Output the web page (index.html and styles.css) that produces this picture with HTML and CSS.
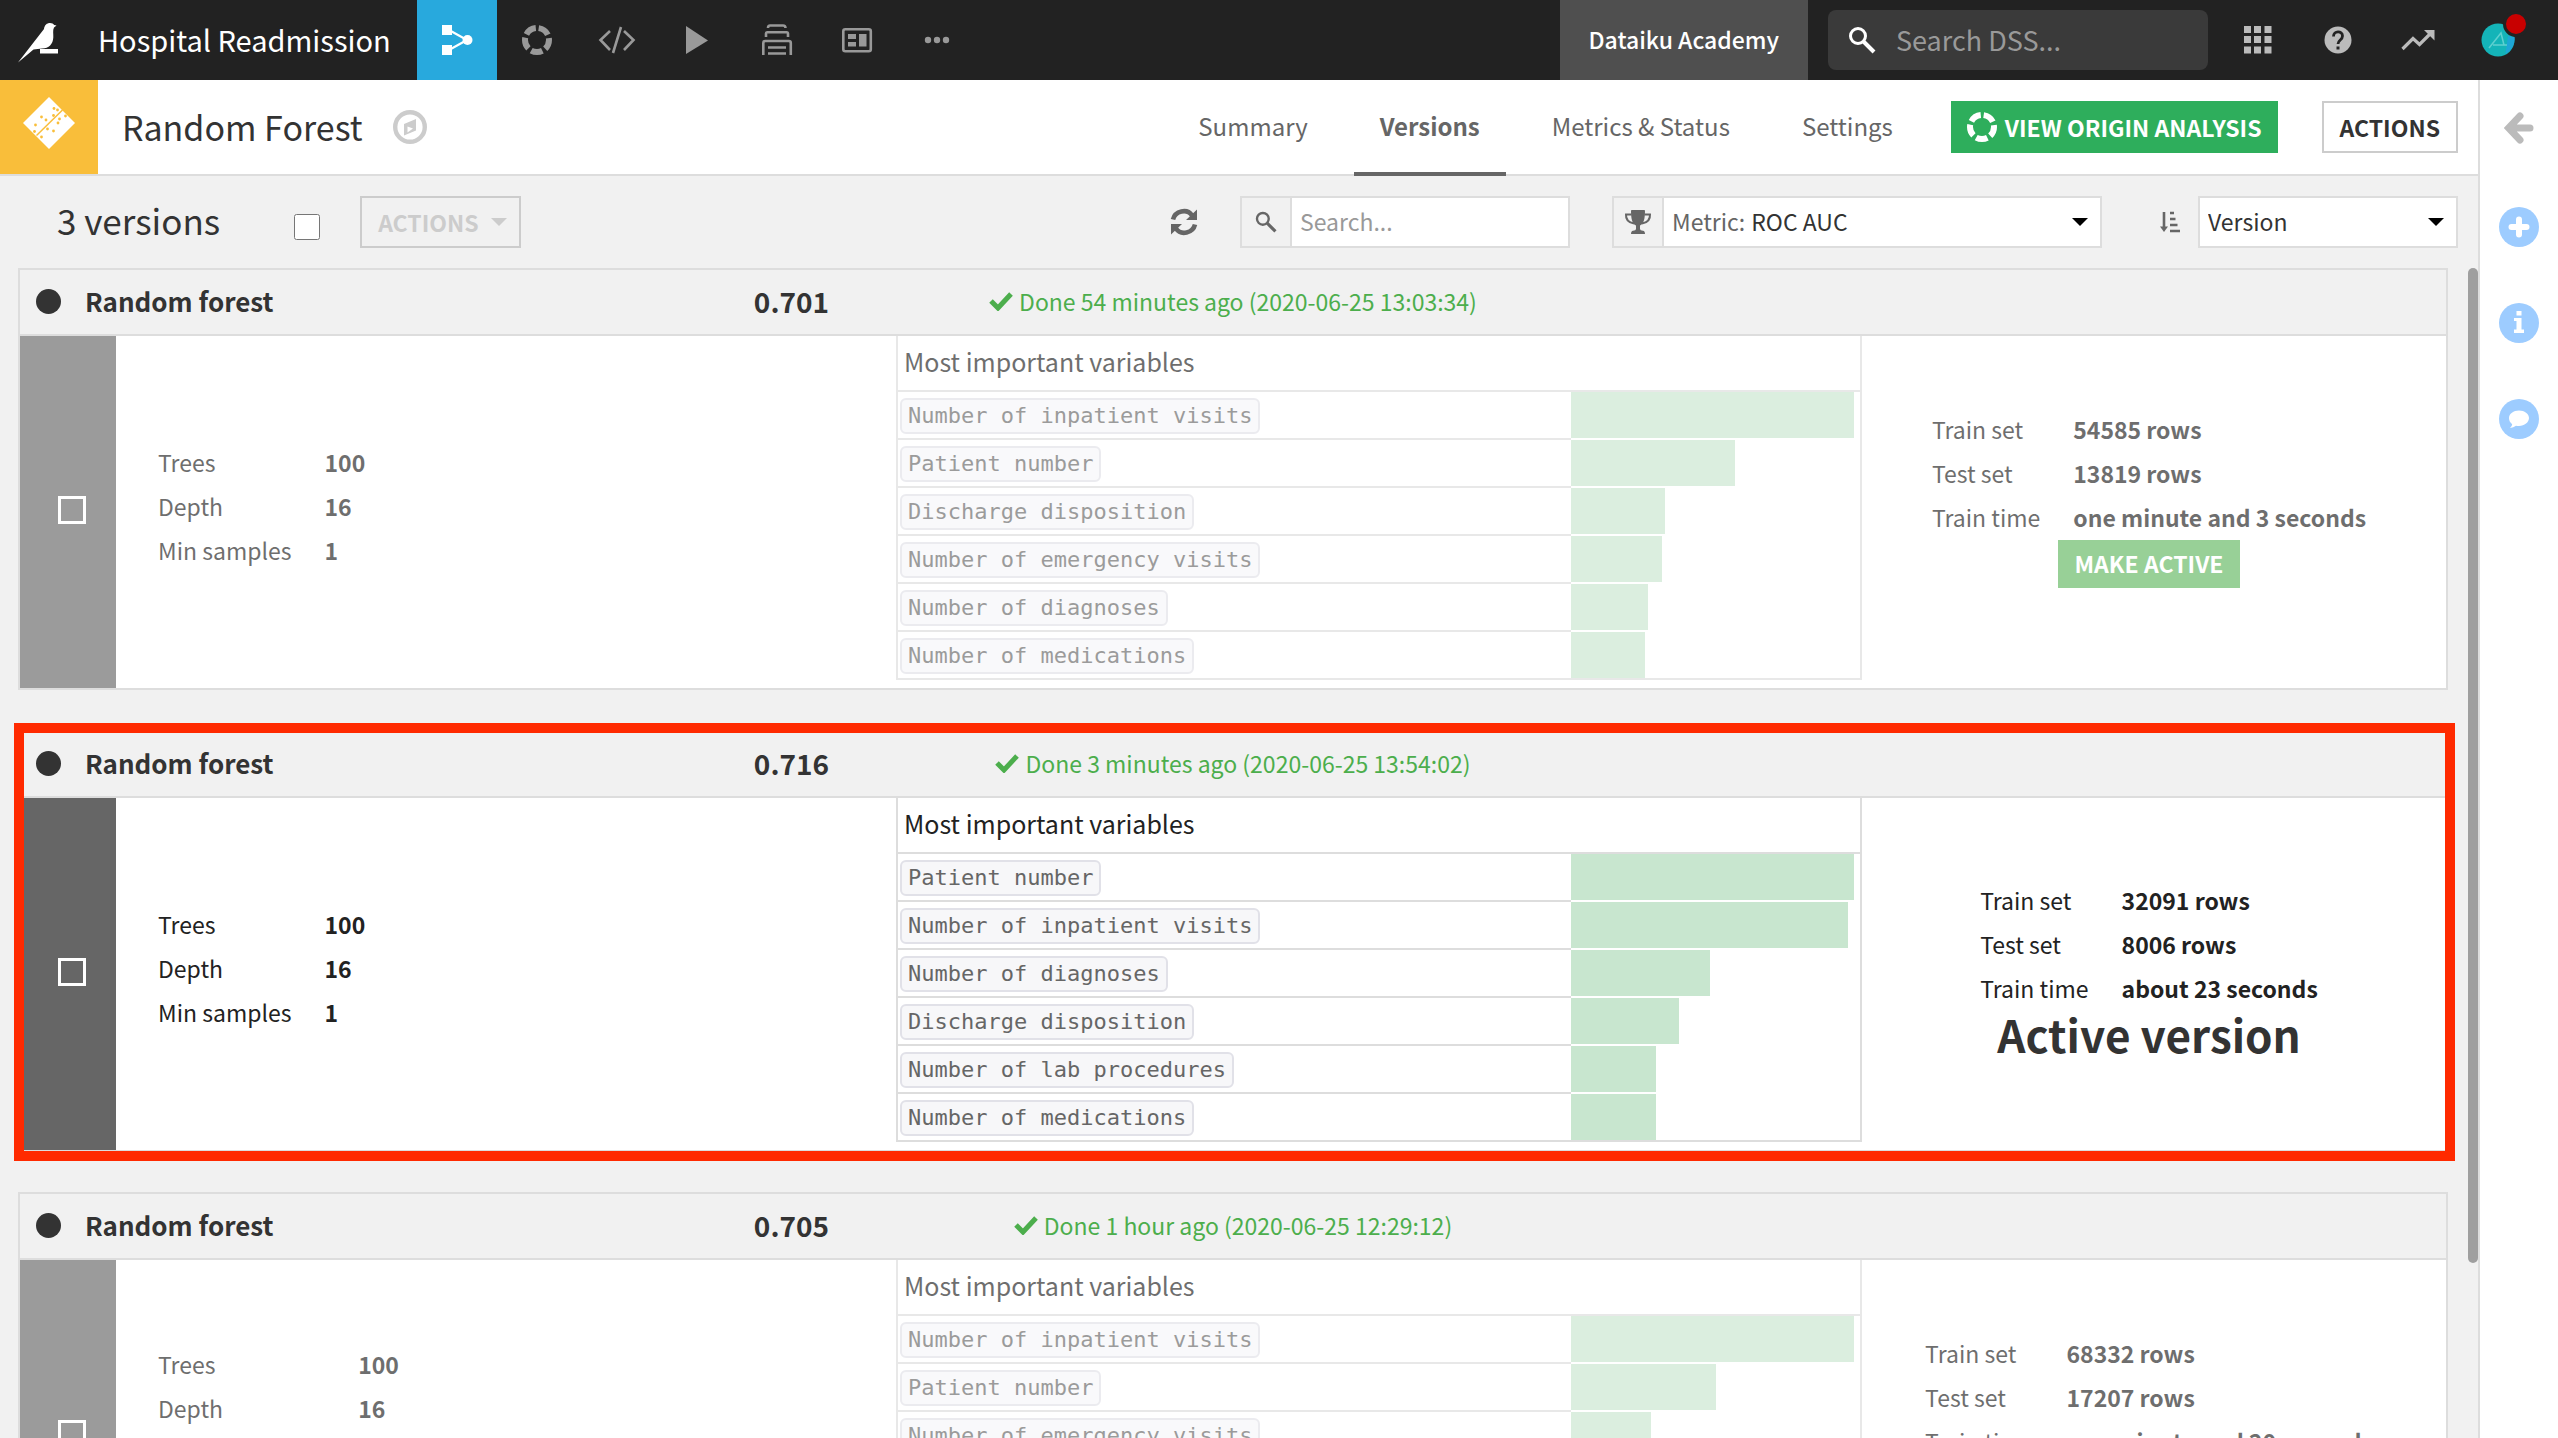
FILE: index.html
```html
<!DOCTYPE html>
<html lang="en">
<head>
    <meta charset="UTF-8">
    <meta name="viewport" content="width=device-width, initial-scale=1.0">
    <title>Random Forest - Versions</title>
    <link rel="stylesheet" href="styles.css">
</head>
<body>

    <svg class="sprite" aria-hidden="true">
        <symbol id="ring" viewBox="0 0 30 30">
            <circle cx="15" cy="15" r="12" fill="none" stroke="currentColor" stroke-width="6" stroke-dasharray="11.6 3.48" stroke-dashoffset="-1.74" transform="rotate(-90 15 15)"/>
        </symbol>
        <symbol id="search" viewBox="0 0 28 28">
            <circle cx="10" cy="10" r="7.5" fill="none" stroke="currentColor" stroke-width="3"/>
            <path d="M15.5 15.5L26 26" stroke="currentColor" stroke-width="4"/>
        </symbol>
        <symbol id="check" viewBox="0 0 24 20">
            <path d="M2 10l7 7L22 3" fill="none" stroke="currentColor" stroke-width="5"/>
        </symbol>
    </svg>

    <header class="topbar">
        <a class="logo" href="#" aria-label="Home">
            <svg width="40" height="40" viewBox="0 0 40 40" fill="#fff"><path d="M0 39.500L26 6C26.500 2 29 0 32 0c2 0 3.500.8 4.200 2L38.500 2.500 36 4.500c-1.500 3-.5 6-.7 10C35 21 31 25.500 24 25.500L15.500 26.500Z"/><path d="M22 26h18v4.500H22z"/></svg>
        </a>
        <a class="project" href="#">Hospital Readmission</a>
        <nav class="topnav">
            <a class="active" href="#" aria-label="Flow"><svg width="32" height="32" viewBox="0 0 32 32" fill="#fff"><path d="M1 1h10v10H1zM1 21h10v10H1z"/><circle cx="26.500" cy="16" r="5"/><path d="M8 6l18 10L8 26" fill="none" stroke="#fff" stroke-width="2.200"/></svg></a>
            <a href="#" aria-label="Lab"><svg width="30" height="30"><use href="#ring"/></svg></a>
            <a href="#" aria-label="Code"><svg width="38" height="30" viewBox="0 0 38 30" fill="none" stroke="currentColor" stroke-width="2.600"><path d="M12 6L2.500 15 12 25M26 6l9.500 9L26 25M23 2l-8 26"/></svg></a>
            <a href="#" aria-label="Jobs"><svg width="22" height="30" viewBox="0 0 22 30" fill="currentColor"><path d="M0 1l22 14.500L0 29z"/></svg></a>
            <a href="#" aria-label="Automation"><svg width="32" height="32" viewBox="0 0 32 32" fill="none" stroke="currentColor" stroke-width="2.600"><path d="M7 4C7 1.800 8 1.500 9 1.500h13c1.500 0 2.500.5 2.500 2.500M5 13V9.500Q5 8.300 6 8.300h20q1 0 1 1.200V13M2.300 31V19q0-2 2-2h23.500q2 0 2 2v12M7 23.500h18M7 29.500h18"/></svg></a>
            <a href="#" aria-label="Dashboards"><svg width="32" height="28" viewBox="0 0 32 28"><rect x="2.300" y="3.300" width="27.500" height="22" rx="2" fill="none" stroke="currentColor" stroke-width="2.600"/><path d="M7 8h8v5H7zM7 16h8v4.500H7zM18 8h7.500v12.500H18z" fill="currentColor"/></svg></a>
            <a href="#" aria-label="More"><svg width="26" height="8" viewBox="0 0 26 8" fill="currentColor"><circle cx="4" cy="4" r="3.200"/><circle cx="13" cy="4" r="3.200"/><circle cx="22" cy="4" r="3.200"/></svg></a>
        </nav>
        <a class="academy" href="#">Dataiku Academy</a>
        <label class="global-search">
            <svg width="28" height="28"><use href="#search"/></svg>
            <input type="text" placeholder="Search DSS..." aria-label="Search DSS">
        </label>
        <div class="tools">
            <button aria-label="Apps"><svg width="28" height="28" viewBox="0 0 28 28" fill="currentColor"><path d="M0 0h7v7H0zM10 0h7v7h-7zM20.500 0h7v7h-7zM0 10h7v7H0zM10 10h7v7h-7zM20.500 10h7v7h-7zM0 20.500h7v7H0zM10 20.500h7v7h-7zM20.500 20.500h7v7h-7z"/></svg></button>
            <button aria-label="Help"><svg width="28" height="28" viewBox="0 0 28 28"><circle cx="14" cy="14" r="13.500" fill="currentColor"/><path d="M9.500 10.500c0-6 9-6 9-.5 0 4-4.500 4-4.500 8" fill="none" stroke="#222" stroke-width="2.800"/><path d="M12.500 20.500h3v3h-3z" fill="#222"/></svg></button>
            <button aria-label="Activity"><svg width="34" height="22" viewBox="0 0 34 22"><path d="M1.500 20L12 9.500l6.500 6L30 4" fill="none" stroke="currentColor" stroke-width="3.200"/><path d="M23 1h10.500v10.500z" fill="currentColor"/></svg></button>
            <button class="avatar" aria-label="Profile"><svg width="34" height="34" viewBox="0 0 34 34"><circle cx="17" cy="17" r="16.500" fill="#14b4b8"/><path d="M33.500 14a17 17 0 0 1-9 17L27 13z" fill="#1ea6d6"/><path d="M8 25L20 10l3 12M12 22h14" fill="none" stroke="#5fd0d0" stroke-width="1.500"/></svg><span class="alert"></span></button>
        </div>
    </header>

    <div class="page">
        <main class="main">
            <div class="title-bar">
                <div class="model-icon">
                    <svg width="52" height="52" viewBox="0 0 52 52"><path d="M26 0l26 26-26 26L0 26z" fill="#fff"/><path d="M13.500 38.500L39.500 13" stroke="#f9be3a" stroke-width="1.500"/><g fill="#f9be3a"><circle cx="31" cy="11.500" r="1.400"/><circle cx="34.500" cy="13" r="1.400"/><circle cx="18.500" cy="20" r="1.400"/><circle cx="30.500" cy="18.500" r="1.400"/><circle cx="23" cy="23" r="1.400"/><circle cx="36.500" cy="22" r="1.400"/><circle cx="42.500" cy="19" r="1.400"/><circle cx="35" cy="26" r="1.400"/><circle cx="12.500" cy="28" r="1.400"/><circle cx="24.500" cy="32" r="1.400"/><circle cx="30.500" cy="34" r="1.400"/><circle cx="11.500" cy="34.500" r="1.400"/><circle cx="18.500" cy="40" r="1.400"/></g></svg>
                </div>
                <h1>Random Forest</h1>
                <button class="compass" aria-label="Navigate"><svg width="34" height="34" viewBox="0 0 34 34"><circle cx="17" cy="17" r="14.800" fill="none" stroke="currentColor" stroke-width="4.400"/><path d="M23 9v11.500L11 25.500V14zM14.500 16.500v6l5.500-4z" fill="currentColor" fill-rule="evenodd"/></svg></button>
                <nav class="tabs">
                    <a href="#">Summary</a>
                    <a class="active" href="#">Versions</a>
                    <a href="#">Metrics &amp; Status</a>
                    <a href="#">Settings</a>
                </nav>
                <button class="btn btn-green"><svg width="30" height="30"><use href="#ring"/></svg>VIEW ORIGIN ANALYSIS</button>
                <button class="btn btn-outline">ACTIONS</button>
            </div>

            <div class="toolbar">
                <h2>3 versions</h2>
                <input class="select-all" type="checkbox" aria-label="Select all">
                <button class="btn btn-muted" disabled>ACTIONS<span class="caret"></span></button>
                <button class="refresh" aria-label="Refresh"><svg width="28" height="28" viewBox="0 0 28 28"><path d="M3 11.500C5 3 17 0 22 7.500M25 16.500C23 25 11 28 6 20.500" fill="none" stroke="currentColor" stroke-width="4.600"/><path d="M27 1.500v10.500H16zM1 26.500V16h11z" fill="currentColor"/></svg></button>
                <div class="field filter">
                    <label class="addon" for="filter" aria-label="Search"><svg width="22" height="22"><use href="#search"/></svg></label>
                    <input id="filter" type="text" placeholder="Search...">
                </div>
                <div class="field metric">
                    <span class="addon"><svg width="28" height="26" viewBox="0 0 28 26"><path d="M7 1.500Q7 1 8 1h12q1 0 1 .5C21 9 20 15 16 16.500V20q0 1.500 3 1.800 2 .2 2 3.200H7q0-3 2-3.200 3-.3 3-1.800v-3.500C8 15 7 9 7 1.500z" fill="currentColor"/><path d="M7.500 5.500H2q-.5 7.500 8 9M20.500 5.500H26q.5 7.500-8 9" fill="none" stroke="currentColor" stroke-width="2"/></svg></span>
                    <label for="metric">Metric:</label>
                    <select id="metric"><option>ROC AUC</option></select>
                    <span class="caret"></span>
                </div>
                <svg class="sort-icon" width="20" height="22" viewBox="0 0 20 22"><path d="M4 1v16M10 2h4M10 8h5.500M10 14h7.500M10 20h10" fill="none" stroke="currentColor" stroke-width="2.600"/><path d="M0 15.500h8L4 21z" fill="currentColor"/></svg>
                <div class="field sort">
                    <select aria-label="Sort by"><option>Version</option></select>
                    <span class="caret"></span>
                </div>
            </div>

            <div class="versions">
                <section class="card">
                    <div class="card-head">
                        <h3><span class="dot"></span>Random forest</h3>
                        <span class="score">0.701</span>
                        <span class="done"><svg width="24" height="20"><use href="#check"/></svg>Done 54 minutes ago (2020-06-25 13:03:34)</span>
                    </div>
                    <div class="card-body">
                        <div class="pick"><input type="checkbox" aria-label="Select version"></div>
                        <div class="params">
                            <table class="facts">
                                <tr><th>Trees</th><td>100</td></tr>
                                <tr><th>Depth</th><td>16</td></tr>
                                <tr><th>Min samples</th><td>1</td></tr>
                            </table>
                        </div>
                        <table class="variables">
                            <colgroup><col class="name-col"><col></colgroup>
                            <thead><tr><th colspan="2">Most important variables</th></tr></thead>
                            <tbody>
                                <tr><td><code>Number of inpatient visits</code></td><td><div class="bar" style="width: 100%"></div></td></tr>
                                <tr><td><code>Patient number</code></td><td><div class="bar" style="width: 58%"></div></td></tr>
                                <tr><td><code>Discharge disposition</code></td><td><div class="bar" style="width: 33%"></div></td></tr>
                                <tr><td><code>Number of emergency visits</code></td><td><div class="bar" style="width: 32%"></div></td></tr>
                                <tr><td><code>Number of diagnoses</code></td><td><div class="bar" style="width: 27%"></div></td></tr>
                                <tr><td><code>Number of medications</code></td><td><div class="bar" style="width: 26%"></div></td></tr>
                            </tbody>
                        </table>
                        <div class="training">
                            <table class="facts">
                                <tr><th>Train set</th><td>54585 rows</td></tr>
                                <tr><th>Test set</th><td>13819 rows</td></tr>
                                <tr><th>Train time</th><td>one minute and 3 seconds</td></tr>
                            </table>
                            <button class="btn make-active">MAKE ACTIVE</button>
                        </div>
                    </div>
                </section>

                <section class="card current">
                    <div class="card-head">
                        <h3><span class="dot"></span>Random forest</h3>
                        <span class="score">0.716</span>
                        <span class="done"><svg width="24" height="20"><use href="#check"/></svg>Done 3 minutes ago (2020-06-25 13:54:02)</span>
                    </div>
                    <div class="card-body">
                        <div class="pick"><input type="checkbox" aria-label="Select version"></div>
                        <div class="params">
                            <table class="facts">
                                <tr><th>Trees</th><td>100</td></tr>
                                <tr><th>Depth</th><td>16</td></tr>
                                <tr><th>Min samples</th><td>1</td></tr>
                            </table>
                        </div>
                        <table class="variables">
                            <colgroup><col class="name-col"><col></colgroup>
                            <thead><tr><th colspan="2">Most important variables</th></tr></thead>
                            <tbody>
                                <tr><td><code>Patient number</code></td><td><div class="bar" style="width: 100%"></div></td></tr>
                                <tr><td><code>Number of inpatient visits</code></td><td><div class="bar" style="width: 98%"></div></td></tr>
                                <tr><td><code>Number of diagnoses</code></td><td><div class="bar" style="width: 49%"></div></td></tr>
                                <tr><td><code>Discharge disposition</code></td><td><div class="bar" style="width: 38%"></div></td></tr>
                                <tr><td><code>Number of lab procedures</code></td><td><div class="bar" style="width: 30%"></div></td></tr>
                                <tr><td><code>Number of medications</code></td><td><div class="bar" style="width: 30%"></div></td></tr>
                            </tbody>
                        </table>
                        <div class="training">
                            <table class="facts">
                                <tr><th>Train set</th><td>32091 rows</td></tr>
                                <tr><th>Test set</th><td>8006 rows</td></tr>
                                <tr><th>Train time</th><td>about 23 seconds</td></tr>
                            </table>
                            <strong class="active-label">Active version</strong>
                        </div>
                    </div>
                </section>

                <section class="card">
                    <div class="card-head">
                        <h3><span class="dot"></span>Random forest</h3>
                        <span class="score">0.705</span>
                        <span class="done"><svg width="24" height="20"><use href="#check"/></svg>Done 1 hour ago (2020-06-25 12:29:12)</span>
                    </div>
                    <div class="card-body">
                        <div class="pick"><input type="checkbox" aria-label="Select version"></div>
                        <div class="params">
                            <table class="facts">
                                <tr><th>Trees</th><td>100</td></tr>
                                <tr><th>Depth</th><td>16</td></tr>
                                <tr><th>Min samples</th><td>1</td></tr>
                                <tr><th>Class weighting</th><td>Yes</td></tr>
                            </table>
                        </div>
                        <table class="variables">
                            <colgroup><col class="name-col"><col></colgroup>
                            <thead><tr><th colspan="2">Most important variables</th></tr></thead>
                            <tbody>
                                <tr><td><code>Number of inpatient visits</code></td><td><div class="bar" style="width: 100%"></div></td></tr>
                                <tr><td><code>Patient number</code></td><td><div class="bar" style="width: 51%"></div></td></tr>
                                <tr><td><code>Number of emergency visits</code></td><td><div class="bar" style="width: 28%"></div></td></tr>
                                <tr><td><code>Discharge disposition</code></td><td><div class="bar" style="width: 27%"></div></td></tr>
                                <tr><td><code>Number of diagnoses</code></td><td><div class="bar" style="width: 26%"></div></td></tr>
                                <tr><td><code>Number of medications</code></td><td><div class="bar" style="width: 25%"></div></td></tr>
                            </tbody>
                        </table>
                        <div class="training">
                            <table class="facts">
                                <tr><th>Train set</th><td>68332 rows</td></tr>
                                <tr><th>Test set</th><td>17207 rows</td></tr>
                                <tr><th>Train time</th><td>one minute and 20 seconds</td></tr>
                            </table>
                            <button class="btn make-active">MAKE ACTIVE</button>
                        </div>
                    </div>
                </section>
                <div class="scroll-thumb"></div>
            </div>
        </main>

        <aside class="side">
            <button class="back" aria-label="Open panel"><svg width="30" height="32" viewBox="0 0 30 32" fill="none" stroke="currentColor" stroke-width="7" stroke-linecap="round"><path d="M16 4L4.500 16 16 28M6 16h20"/></svg></button>
            <button aria-label="Add"><svg width="40" height="40" viewBox="0 0 40 40"><circle cx="20" cy="20" r="20" fill="currentColor"/><path d="M20 12.500v15M12.500 20h15" stroke="#fff" stroke-width="6" stroke-linecap="round"/></svg></button>
            <button aria-label="Details"><svg width="40" height="40" viewBox="0 0 40 40"><circle cx="20" cy="20" r="20" fill="currentColor"/><path d="M17.500 8h5v4.500h-5zM15 15h7.500v11.500H25V30H15v-3.500h2.500V18H15z" fill="#fff"/></svg></button>
            <button aria-label="Discussions"><svg width="40" height="40" viewBox="0 0 40 40"><circle cx="20" cy="20" r="20" fill="currentColor"/><path d="M20 11.500c5.500 0 10 3.200 10 7.500s-4.500 8-10 8q-1.500 0-3-.3-2.500 2-6 2.300 2-1.500 2.200-3.800C11 23.500 10 21.500 10 19c0-4.300 4.500-7.500 10-7.500z" fill="#fff"/></svg></button>
        </aside>
    </div>

</body>
</html>
```

FILE: styles.css
```css
* {
    box-sizing: border-box;
}
body {
    margin: 0;
    height: 100vh;
    display: flex;
    flex-direction: column;
    overflow: hidden;
    background-color: #f1f1f1;
    color: #333;
    font-family: "Noto Sans CJK SC", "Noto Sans", sans-serif;
    font-size: 23px;
    line-height: 32px;
}
a {
    color: inherit;
    text-decoration: none;
}
button, input, select {
    font: inherit;
    color: inherit;
}
button {
    padding: 0;
    border: none;
    background: none;
    cursor: pointer;
}
svg {
    display: block;
    flex: none;
}
h1, h2, h3 {
    margin: 0;
    font-weight: normal;
}
.sprite {
    position: absolute;
    width: 0;
    height: 0;
}

/* Top bar */
.topbar {
    display: flex;
    align-items: center;
    height: 80px;
    flex: none;
    background-color: #222;
    color: #fff;
}
.logo {
    padding: 6px 40px 0 18px;
}
.project {
    margin-right: 26px;
    padding-bottom: 2px;
    font-size: 29px;
}
.topnav {
    display: flex;
    flex: 1;
    color: #999;
}
.topnav a {
    display: flex;
    align-items: center;
    justify-content: center;
    width: 80px;
    height: 80px;
}
.topnav a.active {
    background-color: #28a9dd;
}
.academy {
    padding: 23px 29px 25px;
    background-color: #4f4f4f;
    font-weight: 500;
}
.global-search {
    display: flex;
    align-items: center;
    gap: 18px;
    width: 380px;
    height: 60px;
    margin: 0 10px 0 20px;
    padding-left: 20px;
    border-radius: 8px;
    background-color: #3a3a3a;
}
.global-search input {
    width: 100%;
    border: none;
    outline: none;
    background: none;
    font-size: 27px;
}
input::placeholder {
    color: #999;
    opacity: 1;
}
.tools {
    display: flex;
    padding-right: 20px;
    color: #bbb;
}
.tools button {
    display: flex;
    align-items: center;
    justify-content: center;
    width: 80px;
    height: 80px;
}
.tools .avatar {
    position: relative;
}
.alert {
    position: absolute;
    top: 11px;
    right: 9px;
    width: 26px;
    height: 26px;
    border: 3px solid #222;
    border-radius: 50%;
    background-color: #c80000;
}

/* Page */
.page {
    display: flex;
    flex: 1;
    min-height: 0;
}
.main {
    display: flex;
    flex-direction: column;
    flex: 1;
    min-width: 0;
}
.side {
    display: flex;
    flex-direction: column;
    align-items: center;
    width: 80px;
    padding-top: 32px;
    gap: 56px;
    border-left: 2px solid #ddd;
    background-color: #fff;
    color: #9dccff;
}
.side .back {
    margin-bottom: 7px;
    color: #bbb;
}

/* Model title and tabs */
.title-bar {
    display: flex;
    align-items: center;
    height: 96px;
    flex: none;
    padding-right: 20px;
    border-bottom: 2px solid #ddd;
    background-color: #fff;
}
.model-icon {
    display: flex;
    justify-content: center;
    width: 98px;
    height: 94px;
    padding-top: 17px;
    background-color: #f9be3a;
}
.title-bar h1 {
    margin: 0 30px 0 24px;
    font-size: 34px;
}
.compass {
    color: #ccc;
}
.tabs {
    display: flex;
    gap: 20px;
    align-self: stretch;
    margin: 0 32px -2px auto;
    color: #666;
    font-size: 24px;
}
.tabs a {
    padding: 30px 26px;
}
.tabs a.active {
    border-bottom: 4px solid #666;
    font-weight: bold;
}
.btn {
    display: flex;
    align-items: center;
    justify-content: center;
    height: 52px;
    padding: 0 16px;
    font-weight: bold;
    white-space: nowrap;
}
.btn-green {
    gap: 8px;
    margin-right: 44px;
    background-color: #2eae5c;
    color: #fff;
}
.btn-outline {
    border: 2px solid #ccc;
}
.btn-muted {
    gap: 12px;
    padding: 0 12px 0 16px;
    border: 2px solid #ccc;
    color: #ccc;
}
.caret {
    flex: none;
    border: 8px solid transparent;
    border-top-color: #000;
    border-bottom: none;
}
.btn-muted .caret {
    border-top-color: #ccc;
}

/* Versions toolbar */
.toolbar {
    display: flex;
    align-items: center;
    height: 92px;
    flex: none;
    padding: 0 20px 0 57px;
}
.toolbar h2 {
    padding-bottom: 4px;
    font-size: 35px;
}
.select-all {
    width: 26px;
    height: 26px;
    margin: 10px 40px 0 74px;
}
.refresh {
    margin: 0 42px 0 auto;
    color: #666;
}
.field {
    display: flex;
    align-items: center;
    height: 52px;
    padding-right: 12px;
    border: 2px solid #ddd;
    background-color: #fff;
}
.addon {
    display: flex;
    align-items: center;
    justify-content: center;
    width: 50px;
    height: 48px;
    flex: none;
    margin-right: 8px;
    border-right: 2px solid #ddd;
    background-color: #f1f1f1;
    color: #666;
}
.field input, .field select {
    flex: 1;
    min-width: 0;
    padding: 0 0 2px;
    border: none;
    outline: none;
    background: none;
    appearance: none;
}
.field label:not(.addon) {
    padding-bottom: 2px;
    color: #666;
}
.filter {
    width: 330px;
    margin-right: 42px;
}
.metric {
    width: 490px;
    margin-right: 58px;
}
.metric select {
    margin-left: 6px;
}
.sort-icon {
    margin-right: 18px;
    color: #666;
}
.sort {
    width: 260px;
    padding-left: 8px;
}

/* Version cards */
.versions {
    position: relative;
    display: flex;
    flex-direction: column;
    gap: 40px;
    flex: 1;
    min-height: 0;
    overflow: hidden;
    padding: 0 30px 0 18px;
}
.scroll-thumb {
    position: absolute;
    top: 0;
    right: 0;
    width: 10px;
    height: 85%;
    border-radius: 5px;
    background-color: #9f9f9f;
}
.card {
    position: relative;
    flex: none;
    border: 2px solid #ddd;
}
.card.current::after {
    content: "";
    position: absolute;
    inset: -9px -9px -11px -6px;
    border: 10px solid #ff2a00;
    pointer-events: none;
}
.card-head {
    display: grid;
    grid-template-columns: 27.3% 9% 27.4% 1fr;
    align-items: center;
    justify-items: center;
    height: 66px;
    padding-bottom: 2px;
    border-bottom: 2px solid #ddd;
}
.card-head h3 {
    display: flex;
    align-items: center;
    gap: 24px;
    justify-self: start;
    padding-left: 16px;
    font-size: 26px;
    font-weight: bold;
}
.dot {
    width: 25px;
    height: 25px;
    border-radius: 50%;
    background-color: #333;
}
.score {
    font-size: 28px;
    font-weight: bold;
}
.done {
    display: flex;
    align-items: center;
    gap: 6px;
    color: #4cae4c;
    white-space: nowrap;
}
.card-body {
    display: grid;
    grid-template-columns: 96px 780fr 966fr 584fr;
    height: 352px;
    background-color: #fff;
    color: #222;
}
.card-body > * {
    opacity: 0.65;
}
.current .card-body > * {
    opacity: 1;
}
.pick {
    display: flex;
    align-items: center;
    justify-content: center;
    padding: 0 0 4px 8px;
    background-color: #666;
}
.pick input {
    appearance: none;
    width: 28px;
    height: 28px;
    margin: 0;
    border: 3px solid #fff;
}
.params {
    display: flex;
    align-items: center;
    padding: 0 0 12px 42px;
}
.facts {
    border-collapse: collapse;
}
.facts th, .facts td {
    height: 44px;
    padding: 0;
    font-weight: normal;
    text-align: left;
    white-space: nowrap;
}
.facts th {
    padding-right: 33px;
}
.facts td {
    font-weight: bold;
}
.variables {
    align-self: start;
    width: 100%;
    table-layout: fixed;
    border-collapse: separate;
    border-spacing: 0;
    border: 2px solid #ddd;
    border-top: none;
}
.name-col {
    width: 70%;
}
.variables th {
    height: 56px;
    padding: 0 6px 4px;
    border-bottom: 2px solid #ddd;
    font-size: 25px;
    font-weight: normal;
    text-align: left;
}
.variables td {
    height: 48px;
    padding: 0 0 2px;
}
.variables td:first-child {
    padding: 0 2px;
    border-bottom: 2px solid #ddd;
}
.variables td:last-child {
    padding-right: 6px;
}
.variables tr:last-child td {
    height: 46px;
    padding-bottom: 0;
    border-bottom: none;
}
.variables code {
    display: inline-block;
    padding: 0 6px;
    border: 2px solid #e1e1e8;
    border-radius: 6px;
    background-color: #f7f7f9;
    color: #666;
    font-family: "DejaVu Sans Mono", monospace;
    font-size: 22px;
    vertical-align: middle;
}
.bar {
    height: 46px;
    background-color: #c8e6cf;
}
.training {
    display: flex;
    flex-direction: column;
    align-items: center;
    justify-content: center;
    padding-right: 10px;
}
.make-active {
    height: 48px;
    padding: 0 16px 2px;
    margin: 1px 0 29px;
    background-color: #62b861;
    color: #fff;
}
.active-label {
    margin-bottom: 12px;
    color: #333;
    font-size: 44px;
    line-height: 48px;
}
```
